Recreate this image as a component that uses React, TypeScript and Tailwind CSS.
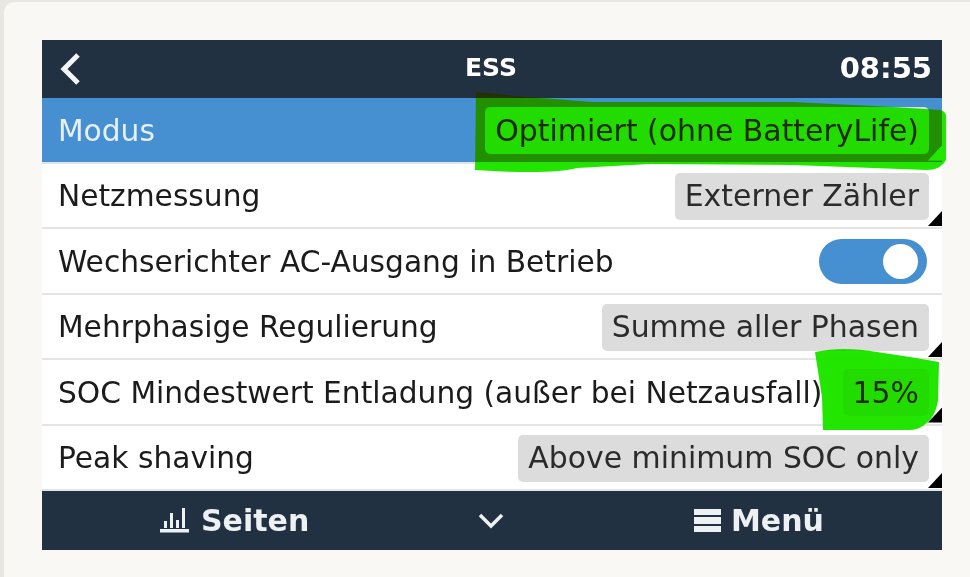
const rows = [
  { label: "Modus", value: "Optimiert (ohne BatteryLife)", active: true },
  { label: "Netzmessung", value: "Externer Zähler" },
  { label: "Wechserichter AC-Ausgang in Betrieb", toggle: true },
  { label: "Mehrphasige Regulierung", value: "Summe aller Phasen" },
  { label: "SOC Mindestwert Entladung (außer bei Netzausfall)", value: "15%" },
  { label: "Peak shaving", value: "Above minimum SOC only" },
];

function Row({ row }: { row: (typeof rows)[number] }) {
  return (
    <div
      className={`relative flex h-[65.6px] items-center justify-between border-b-2 pt-[2px] pl-[16px] pr-[13px] ${
        row.active ? "border-[#dfe3e6] bg-[#468fd0] text-[#e6f0f8]" : "border-[#e4e4e4] bg-white text-[#1b1b1b]"
      }`}
    >
      <span className="whitespace-nowrap pt-[1px]">{row.label}</span>
      {row.toggle && (
        <div className="mr-[2px] flex h-[45px] w-[108px] items-center justify-end rounded-full bg-[#468fd0] pr-[9px]">
          <div className="h-[35px] w-[35px] rounded-full bg-white" />
        </div>
      )}
      {row.value && (
        <div className="flex h-[47px] items-center rounded-[5px] bg-[#dcdcdc] px-[10px] text-[29.9px] text-[#2b2b2b]">
          <span className="whitespace-nowrap pt-[1px]">{row.value}</span>
        </div>
      )}
      {row.value && (
        <div
          className={`absolute right-0 bottom-[1px] h-[15px] w-[14px] [clip-path:polygon(100%_0,100%_100%,0_100%)] ${
            row.active ? "bg-white" : "bg-black"
          }`}
        />
      )}
    </div>
  );
}

export default function App() {
  return (
    <div className="h-[577px] w-[970px] overflow-hidden bg-[#e8e7e2] pt-[2px] pl-[4px] font-['DejaVu_Sans',sans-serif]">
      <div className="relative h-[575px] w-[966px] rounded-tl-[10px] bg-[#f9f8f4] pt-[38px] pl-[38px]">
        <div className="relative flex h-[510px] w-[900px] flex-col text-[29.7px]">
          <div className="flex h-[58px] shrink-0 items-center justify-between bg-[#223141] pr-[10px] pl-[16px] text-white">
            <svg width="24" height="34" viewBox="0 0 24 34" fill="none" stroke="#f4f6f7" strokeWidth="5">
              <path d="M20 3 L6 17 L20 31" />
            </svg>
            <span className="absolute left-[423px] -mt-[2px] text-[25px] font-bold">ESS</span>
            <span className="-mt-[1px] text-[29px] font-bold">08:55</span>
          </div>
          {rows.map((row) => (
            <Row key={row.label} row={row} />
          ))}
          <div className="relative flex h-[59px] shrink-0 items-center bg-[#223141] text-[30px] font-bold text-[#eef1f3]">
            <div className="absolute left-[118px] flex items-center gap-[12px]">
              <svg width="29" height="25" viewBox="0 0 29 25" fill="#eef1f3">
                <rect x="0" y="21" width="29" height="3.5" />
                <rect x="4" y="13" width="3" height="7" />
                <rect x="10" y="5" width="3" height="15" />
                <rect x="16" y="12" width="3" height="8" />
                <rect x="22" y="0" width="3" height="20" />
              </svg>
              <span>Seiten</span>
            </div>
            <svg className="absolute left-[436px]" width="26" height="18" viewBox="0 0 26 18" fill="none" stroke="#eef1f3" strokeWidth="3.5">
              <path d="M2 3 L13 14 L24 3" />
            </svg>
            <div className="absolute left-[652px] flex items-center gap-[10px]">
              <svg width="27" height="23" viewBox="0 0 27 23" fill="#eef1f3">
                <rect x="0" y="0" width="27" height="6" />
                <rect x="0" y="8" width="27" height="7" />
                <rect x="0" y="17" width="27" height="6" />
              </svg>
              <span>Menü</span>
            </div>
          </div>
        </div>
        {/* marker scribbles over the screenshot */}
        <svg className="absolute top-0 left-0 mix-blend-darken" width="966" height="575" viewBox="4 2 966 575" fill="#22e600">
          <path d="M476 92 L527 97 L593 102 L793 102 L893 107 L940 110 C944 111 946 113 946 116 L946 160 C942 167 935 170 927 170 L793 165 L650 164 L577 168 C560 173 520 173 475 170 Z" />
          <path d="M815 352 C825 350 835 349 843 349 C855 349 866 350 877 352 L910 357 L939 362 L938 400 C937 408 934 415 930 420 C924 426 918 430 910 430 L870 430 L823 430 L822 397 Z" />
        </svg>
      </div>
    </div>
  );
}
